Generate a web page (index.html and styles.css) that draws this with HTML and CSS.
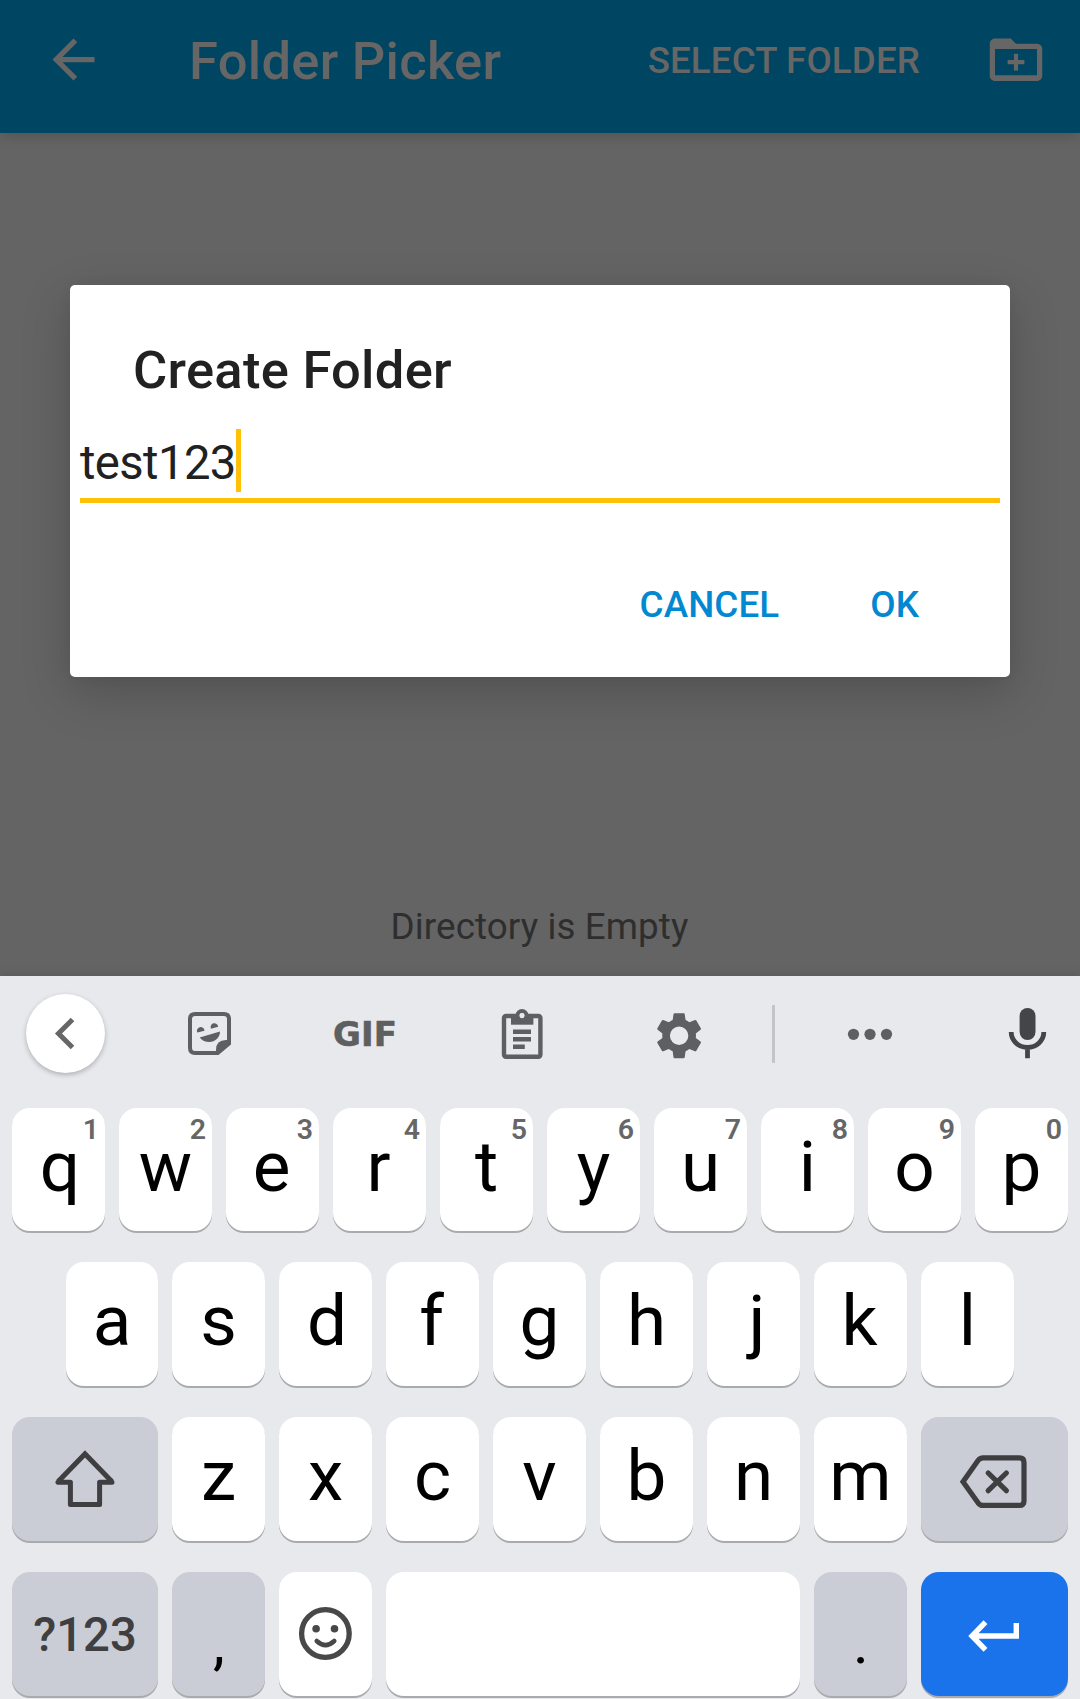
FILE: index.html
```html
<!DOCTYPE html>
<html lang="en">
<head>
<meta charset="utf-8">
<title>Folder Picker</title>
<link rel="stylesheet" href="styles.css">
</head>
<body>
<div class="screen">
  <header class="app-bar">
    <svg class="back" width="63" height="63" viewBox="0 0 24 24"><path fill="currentColor" d="M20 11H7.83l5.59-5.59L12 4l-8 8 8 8 1.41-1.41L7.83 13H20v-2z"/></svg>
    <h1 class="app-title">Folder Picker</h1>
    <span class="select">SELECT FOLDER</span>
    <svg class="new-folder" width="64" height="63" viewBox="0 0 24 24"><path fill="currentColor" fill-rule="evenodd" d="M20 6h-8l-2-2H4c-1.1 0-2 .9-2 2v12.200c0 1.100.9 2 2 2h16c1.100 0 2-.9 2-2V8c0-1.100-.9-2-2-2zm0 12H4V8h16v10zM11.200 16.200h1.600v-2.400h2.400v-1.600h-2.400V9.800h-1.600v2.400H8.800v1.600h2.400z"/></svg>
  </header>

  <main class="content">
    <p class="empty">Directory is Empty</p>
  </main>

  <section class="keyboard">
    <div class="tools">
      <span class="collapse">
        <svg width="79" height="79" viewBox="0 0 79 79"><path d="M46.500 25.500 32.500 39.500l14 14" fill="none" stroke="#666668" stroke-width="5"/></svg>
      </span>
      <svg width="60" height="60" viewBox="0 0 60 60">
        <path d="M37 49H15q-5 0-5-5V15q0-5 5-5h29q5 0 5 5v24" fill="none" stroke="currentColor" stroke-width="4"/>
        <path d="M51 40.500 38.500 51H36v-5q0-10 10-10h5z" fill="currentColor"/>
        <path d="M17.300 28.600a3.800 3.800 0 1 1 7.200-1.900zM31 24.700a3.800 3.800 0 1 1 7.200-1.900zM19.700 33.500 40 27.600C40 34 35 38 29.300 38q-6 0-9.600-4.500z" fill="currentColor"/>
      </svg>
      <span class="gif">GIF</span>
      <svg width="60" height="60" viewBox="0 0 60 60">
        <rect x="12" y="12" width="36.400" height="40.800" rx="2" fill="none" stroke="currentColor" stroke-width="4.400"/>
        <path d="M19 11h22.400v9.700H19z" fill="currentColor"/>
        <path fill-rule="evenodd" d="M30 5a6.600 6.600 0 1 0 0 13.200A6.600 6.600 0 0 0 30 5zm0 4a2.600 2.600 0 1 1 0 5.200A2.600 2.600 0 0 1 30 9z" fill="currentColor"/>
        <circle cx="30" cy="11.600" r="2.600" fill="#e8e9ed"/>
        <path d="M21 25.500h18V30H21zm0 7.500h18v4.400H21zm0 7.400h11.800v4.500H21z" fill="currentColor"/>
      </svg>
      <svg width="60" height="60" viewBox="-1.400 -2.100 26.700 26.700"><path fill="currentColor" fill-rule="evenodd" d="M19.430 12.980c.04-.32.07-.64.07-.98s-.03-.66-.07-.98l2.110-1.650c.19-.15.24-.42.12-.64l-2-3.460c-.12-.22-.39-.3-.61-.22l-2.490 1c-.52-.4-1.080-.73-1.690-.98l-.38-2.650C14.460 2.180 14.250 2 14 2h-4c-.25 0-.46.18-.49.42l-.38 2.650c-.61.25-1.170.59-1.690.98l-2.490-1c-.23-.09-.49 0-.61.22l-2 3.460c-.13.22-.07.49.12.64l2.110 1.650c-.04.32-.07.65-.07.98s.03.66.07.98l-2.110 1.650c-.19.15-.24.42-.12.64l2 3.460c.12.22.39.3.61.22l2.490-1c.52.4 1.080.73 1.690.98l.38 2.650c.03.24.24.42.49.42h4c.25 0 .46-.18.49-.42l.38-2.650c.61-.25 1.170-.59 1.690-.98l2.490 1c.23.09.49 0 .61-.22l2-3.460c.12-.22.07-.49-.12-.64l-2.110-1.650zM12 7.900a4.100 4.100 0 1 0 0 8.200a4.100 4.100 0 0 0 0-8.200z"/></svg>
      <span class="divider"></span>
      <svg width="60" height="60" viewBox="0 0 60 60"><g fill="currentColor"><circle cx="13.500" cy="30.300" r="5.600"/><circle cx="30" cy="30.300" r="5.600"/><circle cx="46.500" cy="30.300" r="5.600"/></g></svg>
      <svg class="mic" width="60" height="60" viewBox="0 0 60 60">
        <rect x="21.600" y="4" width="15.900" height="32" rx="7.900" fill="currentColor"/>
        <path d="M13.200 28a16.300 15.400 0 0 0 32.600 0M29.500 43v11.300" fill="none" stroke="currentColor" stroke-width="4.800"/>
      </svg>
    </div>

    <div class="row row-1">
      <span class="key lean-right">q<sup class="hint">1</sup></span><span class="key">w<sup class="hint">2</sup></span><span class="key lean-left">e<sup class="hint">3</sup></span><span class="key lean-left">r<sup class="hint">4</sup></span><span class="key">t<sup class="hint">5</sup></span><span class="key">y<sup class="hint">6</sup></span><span class="key">u<sup class="hint">7</sup></span><span class="key">i<sup class="hint">8</sup></span><span class="key">o<sup class="hint">9</sup></span><span class="key">p<sup class="hint">0</sup></span>
    </div>
    <div class="row row-2">
      <span class="key">a</span><span class="key">s</span><span class="key lean-right">d</span><span class="key lean-left">f</span><span class="key">g</span><span class="key">h</span><span class="key lean-far">j</span><span class="key lean-left">k</span><span class="key">l</span>
    </div>
    <div class="row row-3">
      <span class="key dark icon">
        <svg width="60" height="60" viewBox="0 0 60 60" fill="none" stroke="currentColor" stroke-width="5">
          <path d="M3.200 32.600 30 4.900l26.800 27.700"/>
          <path stroke-linejoin="round" stroke-linecap="round" d="M4.500 31.300 3 33.200h12.400v22.400h29.200V33.200H57l-1.500-1.900"/>
        </svg>
      </span>
      <span class="key">z</span><span class="key">x</span><span class="key">c</span><span class="key">v</span><span class="key">b</span><span class="key">n</span><span class="key">m</span>
      <span class="key dark icon">
        <svg width="71" height="60" viewBox="0 0 71 60" fill="none" stroke="currentColor" stroke-width="5.200">
          <path d="M4 32.700 19 11.500q2-2.600 5-2.600h36.500q4.500 0 4.500 4.500v38.500q0 4.500-4.500 4.500H24q-3 0-5-2.600z"/>
          <path stroke-linecap="round" d="m29.200 24 18.200 17.700m0-17.700L29.200 41.700"/>
        </svg>
      </span>
    </div>
    <div class="row row-4">
      <span class="key dark symbols">?123</span>
      <span class="key dark punct">,</span>
      <span class="key icon emoji">
        <svg width="61" height="60" viewBox="0 0 61 60">
          <circle cx="30.400" cy="29.500" r="23.800" fill="none" stroke="currentColor" stroke-width="5.300"/>
          <circle cx="21.100" cy="24.700" r="3.800" fill="currentColor"/><circle cx="39.500" cy="24.700" r="3.800" fill="currentColor"/>
          <path d="M21.700 37q8.700 8.200 17.600 0" fill="none" stroke="currentColor" stroke-width="4.500" stroke-linecap="round"/>
        </svg>
      </span>
      <span class="key space"></span>
      <span class="key dark punct">.</span>
      <span class="key icon enter">
        <svg width="71" height="60" viewBox="0 0 71 60" fill="none" stroke="currentColor" stroke-width="5.400"><path d="M26.500 18.100 13 32l13.500 13.900M13 32h44.300V19"/></svg>
      </span>
    </div>
  </section>

  <div class="dialog" role="dialog">
    <h2 class="dialog-title">Create Folder</h2>
    <div class="field"><span class="value">test123</span><span class="caret"></span></div>
    <div class="actions"><span>CANCEL</span><span>OK</span></div>
  </div>
</div>
</body>
</html>
```

FILE: styles.css
```css
* { box-sizing: border-box; }

body {
  margin: 0;
  font-family: Roboto, "Liberation Sans", sans-serif;
  overflow: hidden;
}

svg { display: block; flex: none; }

.screen {
  position: relative;
  display: flex;
  flex-direction: column;
  width: 1080px;
  height: 1699px;
  overflow: hidden;
  background: #646464;
}

/* App bar, dimmed behind the dialog */
.app-bar {
  display: flex;
  align-items: center;
  height: 133px;
  padding: 0 32px 14px 42px;
  background: #004561;
  color: #666;
  box-shadow: 0 2px 14px rgba(0, 0, 0, 0.2);
}

.app-title {
  margin: 0 auto 0 84px;
  padding-top: 2px;
  font-size: 52.5px;
  font-weight: 500;
  line-height: 62px;
  letter-spacing: 0.28px;
}

.select {
  margin-right: 64px;
  padding-top: 2px;
  font-size: 36.75px;
  font-weight: 500;
  line-height: 44px;
  letter-spacing: 0.1px;
}

.content {
  display: flex;
  flex: 1;
  align-items: flex-end;
  justify-content: center;
}

.empty {
  margin: 0 1px 27px 0;
  font-size: 36.75px;
  line-height: 44px;
  letter-spacing: 0.1px;
  color: #2e2e2e;
}

/* Dialog */
.dialog {
  position: absolute;
  left: 70px;
  top: 285px;
  width: 940px;
  height: 392px;
  padding: 54px 10px 0;
  border-radius: 5px;
  background: #fff;
  color: #212121;
  box-shadow: 0 16px 50px rgba(0, 0, 0, 0.19), 0 0 14px rgba(0, 0, 0, 0.05);
}

.dialog-title {
  margin: 0 53px;
  font-size: 52.5px;
  font-weight: 500;
  line-height: 62px;
  letter-spacing: 0.28px;
}

.field {
  display: flex;
  height: 102px;
  padding-top: 28px;
  border-bottom: 5px solid #ffc107;
  font-size: 47.25px;
  line-height: 69px;
}

.value {
  width: 156px;
  letter-spacing: -0.6px;
}

.caret {
  width: 5px;
  height: 63px;
  background: #ffc107;
}

.actions {
  display: flex;
  justify-content: flex-end;
  gap: 91px;
  margin-top: 80px;
  padding-right: 81px;
  font-size: 36.75px;
  font-weight: 500;
  line-height: 44px;
  letter-spacing: 0.1px;
  color: #0288d1;
}

/* Keyboard */
.keyboard {
  height: 723px;
  background: #e8e9ed;
  box-shadow: 0 0 10px rgba(0, 0, 0, 0.15);
}

.tools {
  display: grid;
  grid-template-columns: 131px 158px 152px 162px 152px 37px 156px 132px;
  align-items: center;
  justify-items: center;
  height: 116px;
  margin-bottom: 16px;
  color: #5e5f61;
}

.collapse {
  margin-bottom: 1px;
  border-radius: 50%;
  background: #fff;
  box-shadow: 0 2px 5px rgba(0, 0, 0, 0.25);
}

.gif {
  font: bold 34px/40px "DejaVu Sans", sans-serif;
  -webkit-text-stroke: 0.6px currentColor;
}

.divider {
  width: 3px;
  height: 58px;
  background: #c4c5c9;
}

.mic {
  justify-self: start;
  margin-left: 50px;
  color: #444547;
}

.row {
  display: grid;
  grid-template-columns: repeat(10, 93px);
  gap: 14px;
  height: 124px;
  margin: 0 12px 31px;
}

.row-1 { height: 123px; }

.row-2 {
  grid-template-columns: 92px repeat(8, 93px);
  margin-left: 66px;
}

.row-3 { grid-template-columns: 146px repeat(7, 93px) 147px; }

.row-4 {
  grid-template-columns: 146px 93px 93px 414px 93px 147px;
  margin-bottom: 0;
}

.key {
  position: relative;
  display: flex;
  align-items: center;
  justify-content: center;
  padding-bottom: 6px;
  border-radius: 18px;
  background: #fff;
  box-shadow: 0 2px 0 #a9aaad;
  color: #000;
  font-size: 71px;
  line-height: 84px;
}

/* Optical centring of asymmetric letters */
.lean-right { padding-left: 3px; }
.lean-far { padding-left: 7px; }
.lean-left { padding-right: 2px; }

.hint {
  position: absolute;
  top: 5px;
  right: 6px;
  font-size: 28.5px;
  font-weight: 600;
  line-height: 34px;
  vertical-align: baseline;
  color: #666;
}

.dark {
  background: #cbcdd6;
  color: #3f3f41;
}

.icon { padding: 0; }

.symbols {
  padding: 2px 0 0;
  font-size: 47.25px;
  font-weight: 500;
}

.punct {
  padding: 18px 0 0 1px;
  font-size: 60px;
  color: #000;
}

.emoji { color: #484848; }

.enter {
  background: #1a73ea;
  color: #fff;
}
```
